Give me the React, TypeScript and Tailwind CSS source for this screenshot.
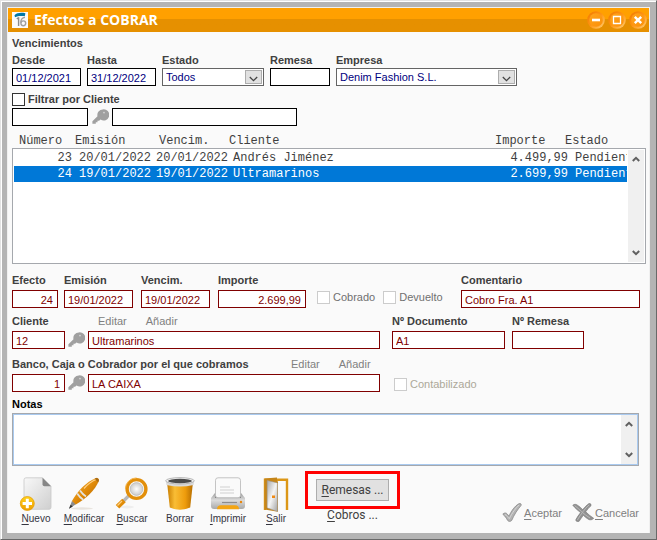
import clsx from "clsx";
import { type ReactNode } from "react";

interface FieldProps {
  id: string;
  label: string;
  value?: string;
  className?: string;
  right?: boolean;
  filter?: boolean;
}

/* Labelled text box: black/blue in the filter area, maroon in the detail area */
function Field({ id, label, value = "", className, right, filter }: FieldProps) {
  return (
    <div className={clsx("flex flex-col", !filter && "gap-0.5", className)}>
      <label htmlFor={id} className="whitespace-nowrap font-bold leading-4">
        {label}
      </label>
      <TextBox id={id} value={value} right={right} filter={filter} />
    </div>
  );
}

interface TextBoxProps {
  id: string;
  value?: string;
  name?: string;
  className?: string;
  right?: boolean;
  filter?: boolean;
}

function TextBox({ id, value = "", name, className, right, filter }: TextBoxProps) {
  return (
    <input
      id={id}
      type="text"
      aria-label={name}
      defaultValue={value}
      className={clsx(
        "h-[18px] w-full min-w-0 border bg-white pl-[3px] pt-px outline-none",
        filter ? "border-black text-[#000080]" : "border-[#800000] text-[#800000]",
        right ? "pr-1 text-right" : "pr-px",
        className,
      )}
    />
  );
}

interface ComboProps {
  id: string;
  label: string;
  options: string[];
  className?: string;
}

function Combo({ id, label, options, className }: ComboProps) {
  return (
    <div className={clsx("flex flex-col", className)}>
      <label htmlFor={id} className="font-bold leading-4">
        {label}
      </label>
      <div className="relative">
        <select
          id={id}
          className="block h-[18px] w-full appearance-none border border-[#646464] bg-white pl-[3px] text-[#000080] outline-none"
        >
          {options.map((option) => (
            <option key={option}>{option}</option>
          ))}
        </select>
        <span className="pointer-events-none absolute inset-y-0.5 right-0.5 flex w-[17px] items-center justify-center border border-[#adadad] bg-[#e1e1e1]">
          <svg viewBox="0 0 9 6" className="mt-1 h-1.5 w-[9px]">
            <path d="M.8 1 4.5 4.6 8.2 1" fill="none" stroke="#444" strokeWidth="1.3" />
          </svg>
        </span>
      </div>
    </div>
  );
}

interface CheckProps {
  id: string;
  label: string;
  className?: string;
  boxClassName?: string;
}

function Check({ id, label, className, boxClassName = "border-[#cccccc]" }: CheckProps) {
  return (
    <div className={clsx("flex items-center gap-[3px] leading-4", className)}>
      <input
        id={id}
        type="checkbox"
        className={clsx("size-[13px] shrink-0 appearance-none border bg-white", boxClassName)}
      />
      <label htmlFor={id}>{label}</label>
    </div>
  );
}

function KeyButton({ name }: { name: string }) {
  return (
    <button type="button" aria-label={name} className="w-[17px] shrink-0">
      <svg viewBox="0 0 17 16" className="h-4 w-[17px]" fill="#a0a0a0">
        <path d="M10.8.4a5.6 5.6 0 0 0-5.300 6.900L.4 12.200v2.600h3.400v-1.500h1.700v-1.500h1.600L8.500 10.500a5.600 5.600 0 1 0 2.300-10.100Z" />
        <circle cx="12" cy="3.600" r=".9" fill="#d4d4d4" />
      </svg>
    </button>
  );
}

function ScrollBar() {
  return (
    <div className="pointer-events-none flex h-full w-4 flex-col items-center justify-between bg-[#f0f0f0] py-1.5">
      <svg viewBox="0 0 8 6" className="h-1.5 w-2">
        <path d="M.8 5 4 1.8 7.2 5" fill="none" stroke="#606060" strokeWidth="2" />
      </svg>
      <svg viewBox="0 0 8 6" className="h-1.5 w-2">
        <path d="M.8 1 4 4.2 7.2 1" fill="none" stroke="#606060" strokeWidth="2" />
      </svg>
    </div>
  );
}

/* Window buttons: round glossy orange */
function TitleButton({ name, children }: { name: string; children: ReactNode }) {
  return (
    <button type="button" aria-label={name}>
      <svg viewBox="0 0 18 18" className="size-[18px]">
        <defs>
          <linearGradient id="ring" x1="0" y1="0" x2="1" y2="1">
            <stop offset="0" stopColor="#f07800" />
            <stop offset=".5" stopColor="#ff9412" />
            <stop offset="1" stopColor="#ffd27a" />
          </linearGradient>
          <linearGradient id="ball" x1="0" y1="0" x2="1" y2="1">
            <stop offset="0" stopColor="#ffa51e" />
            <stop offset="1" stopColor="#fb8f08" />
          </linearGradient>
        </defs>
        <circle cx="9" cy="9" r="8.8" fill="url(#ring)" />
        <circle cx="9" cy="9" r="6.8" fill="url(#ball)" />
        {children}
      </svg>
    </button>
  );
}

function AppIcon() {
  return (
    <svg viewBox="0 0 16 16" className="size-4">
      <rect width="16" height="16" fill="#fbfbfb" />
      <path d="M2.500 3.200C5 .6 9 .4 13.400 1.200l-.6 3C9 3.600 5.500 4 3 5.200Z" fill="#0078a8" />
      <path d="M6.600 5.200v8.800M4.800 7l1.800-1.500" fill="none" stroke="#8a8a8a" strokeWidth="1.4" />
      <path d="M13 5.400c-3 .3-4.200 3-4.200 5.300" fill="none" stroke="#a0a0a0" strokeWidth="1.4" />
      <circle cx="11.3" cy="11.3" r="2.4" fill="none" stroke="#a0a0a0" strokeWidth="1.4" />
    </svg>
  );
}

function NewIcon() {
  return (
    <svg viewBox="0 0 34 34" className="size-[34px]">
      <defs>
        <linearGradient id="sheet" x1="0" y1="0" x2="1" y2="1">
          <stop offset="0" stopColor="#f8f8f8" />
          <stop offset="1" stopColor="#cfcfcf" />
        </linearGradient>
        <linearGradient id="plus" x1="0" y1="0" x2="0" y2="1">
          <stop offset="0" stopColor="#ffd21c" />
          <stop offset="1" stopColor="#ee9d00" />
        </linearGradient>
      </defs>
      <path
        d="M7 .8h16.500l8.500 8.500v21q0 2-2 2H7q-2 0-2-2v-27.500q0-2 2-2Z"
        fill="url(#sheet)"
        stroke="#c8c8c8"
        strokeWidth=".8"
      />
      <path d="M23.500.8v6.500q0 2 2 2H32Z" fill="#868686" />
      <circle cx="8.3" cy="26.5" r="7" fill="url(#plus)" stroke="#e29a00" strokeWidth=".7" />
      <path d="M8.300 21.800v9.400M3.600 26.500H13" stroke="#fff" strokeWidth="3" />
    </svg>
  );
}

function EditIcon() {
  return (
    <svg viewBox="0 0 34 34" className="size-[34px]">
      <defs>
        <linearGradient id="pen" x1="0" y1="0" x2="1" y2="1">
          <stop offset="0" stopColor="#f6b540" />
          <stop offset=".5" stopColor="#e08a08" />
          <stop offset="1" stopColor="#a86000" />
        </linearGradient>
      </defs>
      <ellipse cx="15" cy="31.5" rx="11" ry="1.2" fill="#e8e4de" />
      <path d="M2 31.800 5 23.800l4.200 3.200Z" fill="#8d8d8d" />
      <path d="m2 31.800 1.600-4 2.200 1.600Z" fill="#333" />
      <path d="M5 24C10 14.500 19.500 4.500 29 1.200c2-.4 3.200.6 2.800 2.600C28.800 12.500 18.500 22.500 8.800 27.500Z" fill="url(#pen)" />
      <path d="M10.200 16.500c1.800 2.800 3.600 4.600 6 6.200M13 13.500c1.800 2.600 3.600 4.600 6 6" stroke="#e3e3e3" strokeWidth="1.8" fill="none" />
      <path d="M17 11.500C21 7 25 4 29.500 2.300" stroke="#ffd083" strokeWidth="1.2" fill="none" />
      <path d="m27.500 1.600 2.500-.8 2 2-.7 2.600Z" fill="#aa6b12" />
    </svg>
  );
}

function SearchIcon() {
  return (
    <svg viewBox="0 0 34 34" className="size-[34px]">
      <defs>
        <radialGradient id="lens" cx=".5" cy=".5" r=".5">
          <stop offset="0" stopColor="#fff" />
          <stop offset="1" stopColor="#cbcbcb" />
        </radialGradient>
      </defs>
      <ellipse cx="12" cy="30" rx="7" ry="1.5" fill="#eee" />
      <path d="m14 18.500-7 7" stroke="#b8b8b8" strokeWidth="3.2" />
      <path d="m9 23.500-6.500 6.300" stroke="#e08c08" strokeWidth="5" />
      <path d="m7 24-4.500 4.500" stroke="#ffd080" strokeWidth="1.3" />
      <circle cx="21.5" cy="12" r="9.4" fill="#fafafa" stroke="#e28f0b" strokeWidth="3.4" />
      <circle cx="21.5" cy="12" r="6.4" fill="url(#lens)" stroke="#b8b8b8" strokeWidth=".7" />
      <path d="M21.500.9A11 11 0 0 0 10.400 12" fill="none" stroke="#f5b54c" strokeWidth="1" />
    </svg>
  );
}

function TrashIcon() {
  return (
    <svg viewBox="0 0 34 34" className="size-[34px]">
      <defs>
        <linearGradient id="bin" x1="0" y1="0" x2="1" y2="0">
          <stop offset="0" stopColor="#c87c00" />
          <stop offset=".3" stopColor="#f9bd35" />
          <stop offset=".7" stopColor="#ee9c0c" />
          <stop offset="1" stopColor="#b46c00" />
        </linearGradient>
      </defs>
      <path d="m4 5 2.800 25.500q10 4.500 20.400 0L30 5Z" fill="url(#bin)" />
      <path d="M2.700 3.500h28.600l-.8 4.500q-13.500 3-27 0Z" fill="#d9d9d9" />
      <ellipse cx="17" cy="3.8" rx="14.3" ry="3.2" fill="#f1f1f1" stroke="#aaa" strokeWidth=".8" />
      <ellipse cx="17" cy="4" rx="12" ry="2.2" fill="#4b4b4b" />
    </svg>
  );
}

function PrintIcon() {
  return (
    <svg viewBox="0 0 36 34" className="h-[34px] w-9">
      <defs>
        <linearGradient id="printer" x1="0" y1="0" x2="0" y2="1">
          <stop offset="0" stopColor="#9c9c9c" />
          <stop offset=".45" stopColor="#dcdcdc" />
          <stop offset="1" stopColor="#a9a9a9" />
        </linearGradient>
      </defs>
      <path d="M5 16h26l4 5v8q0 3-3 3H4q-3 0-3-3v-8Z" fill="url(#printer)" />
      <path d="M5 17h26v4H5Z" fill="#858585" />
      <rect x="5.5" y=".8" width="25" height="20" rx="2.5" fill="#fafafa" stroke="#bdbdbd" strokeWidth=".9" />
      <path d="M10 10h10M10 13h14M10 16h14" stroke="#dedede" strokeWidth="1.5" />
      <path d="M12 25.500h15" stroke="#8c8c8c" strokeWidth="1.2" />
      <circle cx="31" cy="25" r="1.2" fill="#e8870c" />
      <path d="M7 32.300q0-4 4-4h14q4 0 4 4Z" fill="#f3a514" />
    </svg>
  );
}

function DoorIcon() {
  return (
    <svg viewBox="0 0 26 36" className="h-9 w-[26px]">
      <defs>
        <linearGradient id="door" x1="0" y1="0" x2="1" y2="1">
          <stop offset="0" stopColor="#a8a8a8" />
          <stop offset=".5" stopColor="#f4f4f4" />
          <stop offset="1" stopColor="#a4a4a4" />
        </linearGradient>
      </defs>
      <path d="M2 33V2.800h22V33" fill="none" stroke="#dc9717" strokeWidth="2.4" />
      <path d="M1.500 1.500 14 .4v3.800h1v30.600L1.500 32.500Z" fill="#c5851a" />
      <path d="m4.200 3.500 10.200 2.400v28.500L4.200 30.800Z" fill="url(#door)" stroke="#999" strokeWidth=".5" />
      <path d="M9 18.500h3v2.500H9Z" fill="#f08a14" />
    </svg>
  );
}

function AcceptIcon() {
  return (
    <svg viewBox="0 0 20 19" className="h-[19px] w-5">
      <path
        d="M.8 11.200c1.600-1.800 3.400-1.500 4.600 0l1.500 2C9.200 8 13 2.800 16.800.8c1.900-.7 2.900.3 2.200 1.800C15.500 6.500 12 12 9.800 17.300c-.8 1.400-3.200 1.400-4.100.2C4.300 15 3 13 .8 11.200Z"
        fill="#b2b2b2"
        stroke="#808080"
        strokeWidth=".7"
      />
      <path d="M3 11.500c2 1.200 3 2.800 4.300 4.200C9.800 10.500 14 4.500 17.200 2" fill="none" stroke="#d6d6d6" />
    </svg>
  );
}

function CancelIcon() {
  return (
    <svg viewBox="0 0 22 19" className="h-[19px] w-[22px]">
      <path
        d="M.8 2.200c1.600-1.300 3.500-1 4.700 0 2 1.200 3.500 2.700 5.200 4.400C12.600 4.300 14.800 2 17 .5c1.800 0 2.600 1 1.700 2.600-1.900 1.700-3.500 3.500-5 5.700 2.500 2.500 5 4.500 8 6.500-1.600 1.600-3.400 1.900-5 1.200-2-1.200-3.800-2.600-5.400-4.200-1.600 2.100-2.700 3.800-4.200 6-2 .6-3.500.1-3.200-1.800 1.400-2.500 2.900-4.700 4.700-6.900C5.300 7 3 5 .8 2.200Z"
        fill="#929292"
        stroke="#747474"
        strokeWidth=".6"
      />
      <path d="M2.600 2.600c4.800 3.200 9 9 15.400 12.400M17.200 1.800C12.500 6 9 11 5.400 17" fill="none" stroke="#b8b8b8" />
    </svg>
  );
}

function ToolButton({ text, plain, children }: { text: string; plain?: boolean; children: ReactNode }) {
  return (
    <button type="button" className="flex w-12 flex-col items-center text-[10px] leading-3">
      <span className="flex h-9 items-start">{children}</span>
      <span className="text-[#35353f]">
        {plain ? text[0] : <u className="underline-offset-2">{text[0]}</u>}
        {text.slice(1)}
      </span>
    </button>
  );
}

/* Editar / Añadir links beside a caption */
function RecordLinks() {
  return (
    <span className="flex gap-[19px] text-[#808080]">
      <button type="button">Editar</button>
      <button type="button">Añadir</button>
    </span>
  );
}

const rows = [
  { id: "23", issued: "20/01/2022", due: "20/01/2022", client: "Andrés Jiménez", amount: "4.499,99", state: "Pendient" },
  { id: "24", issued: "19/01/2022", due: "19/01/2022", client: "Ultramarinos", amount: "2.699,99", state: "Pendient" },
];

const selectedId = "24";

function DueList() {
  return (
    <div className="relative mt-2">
      <table className="block text-left font-['Liberation_Mono','Courier_New',monospace] text-[12px] text-[#3f3f3f]">
        <thead className="block">
          <tr className="grid grid-cols-[56px_84px_70px_1fr_70px_81px] pl-[7px] leading-[14px] *:font-normal">
            <th>Número</th>
            <th>Emisión</th>
            <th>Vencim.</th>
            <th>Cliente</th>
            <th>Importe</th>
            <th>Estado</th>
          </tr>
        </thead>
        <tbody className="block h-[116px] border border-[#a5a8ad] bg-white py-px pl-px pr-[18px]">
          {rows.map((row) => (
            <tr
              key={row.id}
              className={clsx(
                "grid grid-cols-[58px_70px_70px_1fr_80px_52px] gap-x-[7px] overflow-hidden whitespace-nowrap leading-4",
                row.id === selectedId && "bg-[#0078d7] text-white",
              )}
            >
              <td className="text-right">{row.id}</td>
              <td>{row.issued}</td>
              <td>{row.due}</td>
              <td>{row.client}</td>
              <td className="text-right">{row.amount}</td>
              <td>{row.state}</td>
            </tr>
          ))}
        </tbody>
      </table>
      <div className="absolute bottom-0.5 right-0.5 h-28">
        <ScrollBar />
      </div>
    </div>
  );
}

function TitleBar() {
  return (
    <header className="flex h-6 items-center bg-linear-to-b from-[#ffa000] from-45% to-[#e69000] to-45% pl-1 pr-0.5">
      <AppIcon />
      <h1 className="ml-1.5 flex-1 font-['Open_Sans','Noto_Sans',sans-serif] text-[14px] font-bold leading-5 text-white">
        Efectos a COBRAR
      </h1>
      <div className="flex gap-[3px]">
        <TitleButton name="Minimizar">
          <path d="M5 9h8" stroke="#fff" strokeWidth="2.6" />
        </TitleButton>
        <TitleButton name="Maximizar">
          <path d="M5.500 5.500h7v7h-7Z" fill="none" stroke="#fff" strokeWidth="1.3" />
        </TitleButton>
        <TitleButton name="Cerrar">
          <path d="m5.800 5.800 6.400 6.400m0-6.400-6.400 6.400" stroke="#fff" strokeWidth="2.4" />
        </TitleButton>
      </div>
    </header>
  );
}

export default function App() {
  return (
    <div className="flex min-h-screen flex-col border border-b-[#696969] border-l-[#e3e3e3] border-r-[#696969] border-t-[#e3e3e3] font-['Liberation_Sans',Arial,sans-serif] text-[11px] text-[#404040]">
      <div className="flex flex-1 flex-col border-l border-t border-white bg-[#b4b4b4] pb-1.5 pl-[5px] pr-1.5 pt-[5px]">
        <main className="flex flex-1 flex-col border-l border-r border-t border-[#f0f0f0] bg-[#fafafa]">
          <TitleBar />

          <div className="flex flex-1 flex-col pb-2 pl-1 pr-[3px] pt-[3px]">
            <section>
              <h2 className="mb-px text-[11px] font-bold leading-4">Vencimientos</h2>
              <div className="flex gap-1.5">
                <Field filter id="desde" label="Desde" value="01/12/2021" className="w-[69px]" />
                <Field filter id="hasta" label="Hasta" value="31/12/2022" className="w-[69px]" />
                <Combo id="estado" label="Estado" options={["Todos"]} className="w-[102px]" />
                <Field filter id="remesa" label="Remesa" className="w-[60px]" />
                <Combo id="empresa" label="Empresa" options={["Denim Fashion S.L."]} className="w-[181px]" />
              </div>
              <Check
                id="filtrar"
                label="Filtrar por Cliente"
                className="mb-px mt-[5px] font-bold"
                boxClassName="border-[#333]"
              />
              <div className="flex items-center">
                <TextBox filter id="filtroCodigo" name="Código de cliente" className="max-w-[76px]" />
                <div className="flex w-6 shrink-0 justify-center">
                  <KeyButton name="Buscar cliente del filtro" />
                </div>
                <TextBox filter id="filtroNombre" name="Nombre de cliente" className="max-w-[185px]" />
              </div>
              <DueList />
            </section>

            <section className="mt-2 flex flex-col gap-[5px] pr-1.5">
              <div className="flex gap-2">
                <Field right id="efecto" label="Efecto" value="24" className="-mr-0.5 w-[46px]" />
                <Field id="emision" label="Emisión" value="19/01/2022" className="w-[69px]" />
                <Field id="vencim" label="Vencim." value="19/01/2022" className="w-[69px]" />
                <Field right id="importe" label="Importe" value="2.699,99" className="w-[88px]" />
                <div className="mb-[3px] ml-[3px] flex items-end gap-2 text-[#707070]">
                  <Check id="cobrado" label="Cobrado" />
                  <Check id="devuelto" label="Devuelto" />
                </div>
                <Field id="comentario" label="Comentario" value="Cobro Fra. A1" className="ml-auto w-[179px]" />
              </div>

              <div className="flex">
                <div className="flex flex-1 flex-col gap-0.5">
                  <div className="flex leading-4">
                    <label htmlFor="cliente" className="w-[86px] font-bold">
                      Cliente
                    </label>
                    <RecordLinks />
                  </div>
                  <div className="flex items-center">
                    <TextBox id="cliente" value="12" className="max-w-[53px]" />
                    <div className="flex w-[23px] shrink-0 justify-center">
                      <KeyButton name="Buscar cliente" />
                    </div>
                    <TextBox id="clienteNombre" name="Nombre del cliente" value="Ultramarinos" />
                  </div>
                </div>
                <div className="flex w-[260px] gap-[7px] pl-3">
                  <Field id="documento" label="Nº Documento" value="A1" className="w-[113px]" />
                  <Field id="nRemesa" label="Nº Remesa" className="w-[72px]" />
                </div>
              </div>

              <div className="mt-0.5 flex">
                <div className="flex flex-1 flex-col gap-0.5">
                  <div className="flex leading-4">
                    <label htmlFor="banco" className="w-[279px] font-bold">
                      Banco, Caja o Cobrador por el que cobramos
                    </label>
                    <RecordLinks />
                  </div>
                  <div className="flex items-center">
                    <TextBox right id="banco" value="1" className="max-w-[53px]" />
                    <div className="flex w-[23px] shrink-0 justify-center">
                      <KeyButton name="Buscar banco" />
                    </div>
                    <TextBox id="bancoNombre" name="Nombre del banco" value="LA CAIXA" />
                  </div>
                </div>
                <Check
                  id="contabilizado"
                  label="Contabilizado"
                  className="w-[260px] self-end pl-3.5 text-[#aca899]"
                />
              </div>
            </section>

            <section className="mt-1 flex flex-col pr-[7px]">
              <label htmlFor="notas" className="font-bold leading-4 text-black">
                Notas
              </label>
              <div className="relative mt-px">
                <textarea
                  id="notas"
                  className="block h-[53px] w-full resize-none border border-[#a5a8ad] bg-white p-1 outline-1 -outline-offset-2 outline-[#a9caf0]"
                />
                <div className="absolute inset-y-0.5 right-0.5">
                  <ScrollBar />
                </div>
              </div>
            </section>

            <footer className="mt-auto flex items-end pr-[7px]">
              <div className="flex">
                <ToolButton text="Nuevo">
                  <NewIcon />
                </ToolButton>
                <ToolButton text="Modificar">
                  <EditIcon />
                </ToolButton>
                <ToolButton text="Buscar">
                  <SearchIcon />
                </ToolButton>
                <ToolButton text="Borrar" plain>
                  <TrashIcon />
                </ToolButton>
                <ToolButton text="Imprimir">
                  <PrintIcon />
                </ToolButton>
                <ToolButton text="Salir">
                  <DoorIcon />
                </ToolButton>
              </div>
              <div className="mb-1 ml-[5px] flex flex-col items-center font-[Roboto,sans-serif] text-[12px] leading-3">
                <div className="border-3 border-[#ff0000] px-2 py-[5px]">
                  <button type="button" className="block h-[22px] w-[73px] border border-[#adadad] bg-[#e1e1e1]">
                    <u className="underline-offset-2">R</u>emesas ...
                  </button>
                </div>
                <button type="button">
                  <u className="underline-offset-2">C</u>obros ...
                </button>
              </div>
              <div className="mb-[3px] ml-auto flex gap-2.5 leading-4 text-[#808080]">
                <button type="button" className="flex items-center gap-0.5">
                  <AcceptIcon />
                  <span>
                    <u className="underline-offset-2">A</u>ceptar
                  </span>
                </button>
                <button type="button" className="flex items-center gap-px">
                  <CancelIcon />
                  <span>
                    <u className="underline-offset-2">C</u>ancelar
                  </span>
                </button>
              </div>
            </footer>
          </div>
        </main>
      </div>
    </div>
  );
}
